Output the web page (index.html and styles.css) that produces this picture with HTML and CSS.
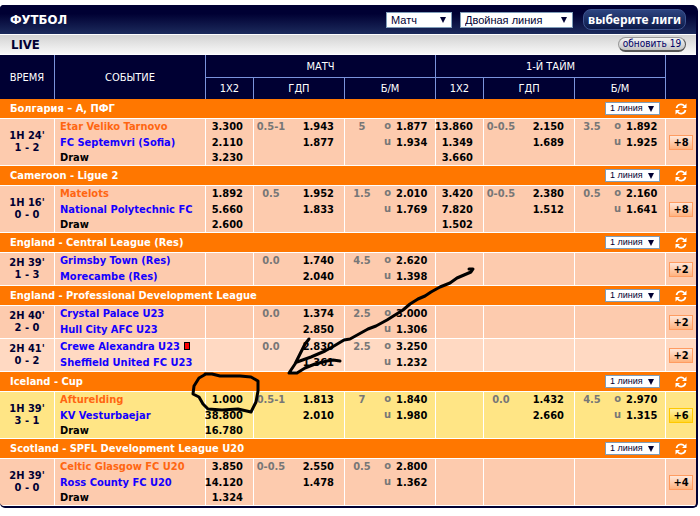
FILE: index.html
```html
<!DOCTYPE html>
<html lang="ru">
<head>
    <meta charset="UTF-8">
    <meta name="viewport" content="width=device-width, initial-scale=1.0">
    <title>Футбол - Live</title>
    <link rel="stylesheet" href="styles.css">
</head>
<body>
    <div class="panel">
        <div class="title-bar">
            <h1>ФУТБОЛ</h1>
            <select class="period" aria-label="Период">
                <option>Матч</option>
            </select>
            <select class="line-type" aria-label="Тип линии">
                <option>Двойная линия</option>
            </select>
            <button class="leagues-btn" type="button">выберите лиги</button>
        </div>
        <div class="live-bar">
            <h2>LIVE</h2>
            <button class="refresh-btn" type="button">обновить 19</button>
        </div>
        <table class="odds">
            <colgroup>
                <col class="c-time"><col>
                <col class="c-win"><col class="c-pair"><col class="c-pair">
                <col class="c-win"><col class="c-pair"><col class="c-pair">
                <col class="c-more">
            </colgroup>
            <thead>
                <tr>
                    <th rowspan="2">ВРЕМЯ</th>
                    <th rowspan="2">СОБЫТИЕ</th>
                    <th colspan="3">МАТЧ</th>
                    <th colspan="3">1-Й ТАЙМ</th>
                    <th rowspan="2"></th>
                </tr>
                <tr class="sub">
                    <th>1X2</th>
                    <th>ГДП</th>
                    <th>Б/М</th>
                    <th>1X2</th>
                    <th>ГДП</th>
                    <th>Б/М</th>
                </tr>
            </thead>
            <tbody id="lines"></tbody>
        </table>
    </div>

    <!-- hand drawn marks over the table -->
    <svg class="marks" width="700" height="516" viewBox="0 0 700 516" aria-hidden="true">
        <path d="M469 269L473 269L471 272L464 275L457 278L450 283L440 287L431 292L425 296L418 299L410 304L403 310L395 315L387 320L376 326L368 329L359 334L350 339L344 340L334 346L325 351L311 357L297 362"/>
        <path d="M309 339L305 344L300 354L295 364L289 373L297 373L305 368L315 364L327 361L333 360L340 361"/>
        <path d="M206 374L199 378L194 386L193 394L199 397L203 404L208 409L222 410L238 409L251 412L256 402L258 391L258 381L251 377L240 376L220 376L212 374L205 374"/>
    </svg>

    <script>
        // fav / card hold the index of the team they belong to
        const leagues = [
            { name: 'Болгария – А, ПФГ', games: [
                { time: "1H 24'", score: '1 - 2', teams: ['Etar Veliko Tarnovo', 'FC Septemvri (Sofia)'], fav: 0, more: 8,
                  match: [['3.300', '2.110', '3.230'], ['0.5-1', '1.943', '1.877'], ['5', '1.877', '1.934']],
                  half: [['13.860', '1.349', '3.660'], ['0-0.5', '2.150', '1.689'], ['3.5', '1.892', '1.925']] }
            ] },
            { name: 'Cameroon - Ligue 2', games: [
                { time: "1H 16'", score: '0 - 0', teams: ['Matelots', 'National Polytechnic FC'], fav: 0, more: 8,
                  match: [['1.892', '5.660', '2.600'], ['0.5', '1.952', '1.833'], ['1.5', '2.010', '1.769']],
                  half: [['3.420', '7.820', '1.502'], ['0-0.5', '2.380', '1.512'], ['0.5', '2.160', '1.641']] }
            ] },
            { name: 'England - Central League (Res)', games: [
                { time: "2H 39'", score: '1 - 3', teams: ['Grimsby Town (Res)', 'Morecambe (Res)'], more: 2,
                  match: [null, ['0.0', '1.740', '2.040'], ['4.5', '2.620', '1.398']] }
            ] },
            { name: 'England - Professional Development League', games: [
                { time: "2H 40'", score: '2 - 0', teams: ['Crystal Palace U23', 'Hull City AFC U23'], more: 2,
                  match: [null, ['0.0', '1.374', '2.850'], ['2.5', '3.000', '1.306']] },
                { time: "2H 41'", score: '0 - 2', teams: ['Crewe Alexandra U23', 'Sheffield United FC U23'], card: 0, more: 2, row: 'light',
                  match: [null, ['0.0', '2.830', '1.361'], ['2.5', '3.250', '1.232']] }
            ] },
            { name: 'Iceland - Cup', games: [
                { time: "1H 39'", score: '3 - 1', teams: ['Afturelding', 'KV Vesturbaejar'], fav: 0, more: 6, row: 'changed',
                  match: [['1.000', '38.800', '16.780'], ['0.5-1', '1.813', '2.010'], ['7', '1.840', '1.980']],
                  half: [null, ['0.0', '1.432', '2.660'], ['4.5', '2.970', '1.315']] }
            ] },
            { name: 'Scotland - SPFL Development League U20', games: [
                { time: "2H 39'", score: '0 - 0', teams: ['Celtic Glasgow FC U20', 'Ross County FC U20'], fav: 0, more: 4,
                  match: [['3.850', '14.120', '1.324'], ['0-0.5', '2.550', '1.478'], ['0.5', '2.800', '1.362']] }
            ] }
        ];

        const reloadIcon = `<svg width="12" height="12" viewBox="0 0 12 12" aria-hidden="true">
            <path d="M1.5 5A4.5 4.5 0 0 1 9.4 3M10.5 7A4.5 4.5 0 0 1 2.6 9" fill="none" stroke="#fff" stroke-width="1.7"/>
            <path d="M11.5 .5V5H7zM.5 11.5V7H5z" fill="#fff"/>
        </svg>`;

        function winCell(odds) {
            return `<td class="win">${(odds || []).map(o => `<div>${o}</div>`).join('')}</td>`;
        }

        function pairCell(data, marks) {
            if (!data) return '<td></td>';
            return `<td><div class="pair">
                <span class="hcp">${data[0]}</span><i>${marks[0]}</i><b>${data[1]}</b>
                <span></span><i>${marks[1]}</i><b>${data[2]}</b>
            </div></td>`;
        }

        function oddsCells(set) {
            const [win, hcp, total] = set || [];
            return winCell(win) + pairCell(hcp, ['', '']) + pairCell(total, ['o', 'u']);
        }

        function gameRow(g) {
            const teams = g.teams.map((t, i) =>
                `<a href="#" class="${g.fav === i ? 'fav' : ''}">${t}${g.card === i ? '<span class="card"></span>' : ''}</a>`
            ).join('');
            const draw = g.fav === undefined ? '' : '<div class="draw">Draw</div>';
            return `<tr class="game ${g.row || ''}">
                <td class="time">${g.time}<br>${g.score}</td>
                <td class="event">${teams}${draw}</td>
                ${oddsCells(g.match)}${oddsCells(g.half)}
                <td class="more"><button type="button">+${g.more}</button></td>
            </tr>`;
        }

        document.getElementById('lines').innerHTML = leagues.map(l => `
            <tr class="league">
                <td colspan="8"><div class="league-head">
                    <span>${l.name}</span>
                    <select aria-label="${l.name}"><option>1 линия</option></select>
                </div></td>
                <td class="reload"><button type="button" aria-label="Обновить">${reloadIcon}</button></td>
            </tr>${l.games.map(gameRow).join('')}`).join('');
    </script>
</body>
</html>
```
FILE: styles.css
```css
body {
    margin: 0;
    padding: 5px 2px 0 0;
    background-color: #fff;
    font-family: "DejaVu Sans Condensed", "Noto Sans", sans-serif;
    font-size: 11px;
    color: #000;
}

h1, h2 {
    margin: 0;
    color: #fff;
    font-size: 13px;
}

button, select {
    box-sizing: border-box;
    margin: 0;
    font-family: inherit;
    cursor: pointer;
}

.panel {
    background-color: #000033;
    border-right: 2px solid #000033;
    border-bottom: 2px solid #000033;
    border-radius: 4px 6px 5px 5px;
    overflow: hidden;
}

/* top bars */
.title-bar {
    display: flex;
    align-items: center;
    gap: 8px;
    height: 29px;
    padding: 0 10px;
    background: linear-gradient(#000033 30%, #1c2b5c);
}

.title-bar h1,
.live-bar h2 {
    flex: 1;
}

select {
    appearance: none;
    border: 1px solid #7f9db9;
    border-radius: 0;
    color: #000033;
    background: #fff url("data:image/svg+xml,%3Csvg xmlns='http://www.w3.org/2000/svg' width='6' height='6'%3E%3Cpath d='M0 0h6L3 6z' fill='%23000033'/%3E%3C/svg%3E") no-repeat right 5px center;
}

.title-bar select {
    height: 16px;
    padding: 0 4px;
    font-family: "Liberation Sans", Arial, sans-serif;
    font-size: 11px;
}

.period {
    width: 66px;
}

.line-type {
    width: 113px;
}

.leagues-btn {
    width: 103px;
    height: 21px;
    margin-left: 2px;
    padding: 0;
    border: 1px solid #3f5590;
    border-radius: 8px;
    background: linear-gradient(#2d4480, #0c1a4a);
    color: #fff;
    font-family: "Noto Sans", sans-serif;
    font-size: 12px;
    font-weight: bold;
    line-height: 18px;
    white-space: nowrap;
}

.live-bar {
    display: flex;
    align-items: center;
    height: 19px;
    padding: 0 10px 0 11px;
    border: 1px solid #fff;
    border-width: 1px 0;
    background: linear-gradient(#d3d3d3, #f8f8f8);
}

.live-bar h2 {
    color: #000033;
}

.refresh-btn {
    width: 68px;
    height: 15px;
    padding: 0;
    border: 1px solid #999;
    border-right-color: #555;
    border-bottom: 2px solid #555;
    border-radius: 8px;
    background: linear-gradient(#f4f4f4, #c4c4c4);
    color: #000066;
    font-size: 10px;
    line-height: 12px;
}

/* odds table */
.odds {
    width: 100%;
    table-layout: fixed;
    border-collapse: separate;
    border-spacing: 0;
}

.c-time { width: 54px; }
.c-win { width: 48px; }
.c-pair { width: 91px; }
.c-more { width: 31px; }

th, td {
    box-sizing: border-box;
    padding: 0;
}

th {
    height: 22px;
    border-left: 1px solid #7a93dc;
    color: #fff;
    font-weight: normal;
}

tr:first-child th:first-child {
    border-left: 0;
}

.sub th {
    border-top: 1px solid #7a93dc;
}

.league td {
    height: 20px;
    border-bottom: 1px solid #fff;
    background-color: #ff7700;
}

.league-head {
    display: flex;
    align-items: center;
    justify-content: space-between;
    padding: 0 5px 0 10px;
    color: #fff;
    font-weight: bold;
}

.league select {
    width: 55px;
    height: 13px;
    padding: 0 4px;
    font-family: "Liberation Sans", Arial, sans-serif;
    font-size: 9px;
    line-height: 11px;
}

.reload {
    text-align: center;
}

.reload button {
    display: block;
    margin: 0 auto;
    padding: 0;
    border: 0;
    background: none;
}

.reload svg {
    display: block;
}

.game td {
    border-left: 1px solid #fff;
    border-bottom: 1px solid #fff;
    background-color: #fdcbae;
    font-weight: bold;
    line-height: 15px;
    vertical-align: top;
}

.game td:first-child {
    border-left: 0;
}

.game.light td {
    background-color: #ffd9c2;
}

.game.changed td {
    background-color: #ffe585;
}

.game .time {
    color: #000033;
    line-height: 12px;
    text-align: center;
    vertical-align: middle;
}

.event a {
    display: block;
    padding-left: 5px;
    color: #1400ff;
    line-height: 16px;
    text-decoration: none;
}

.event a.fav {
    color: #ff6611;
}

.event .draw {
    padding-left: 5px;
    line-height: 14px;
}

.card {
    display: inline-block;
    width: 4px;
    height: 6px;
    margin-left: 4px;
    border: 1px solid #000;
    background-color: #f00;
}

.win {
    text-align: right;
}

.win div {
    margin-left: -6px;
    padding-right: 10px;
    line-height: 16px;
}

.win div:nth-child(3) {
    line-height: 14px;
}

.pair {
    display: grid;
    grid-template-columns: 34px 1fr auto;
    column-gap: 5px;
    padding-right: 10px;
    line-height: 16px;
}

.pair .hcp {
    color: #777;
    text-align: center;
}

.pair i {
    color: #777;
    font-style: normal;
    line-height: 13px;
    text-align: right;
}

.game .more {
    text-align: center;
    vertical-align: middle;
}

.more button {
    width: 24px;
    height: 15px;
    padding: 0;
    border: 1px solid #ff9c60;
    background: linear-gradient(#ffe6d8, #ffb27e);
    color: #000;
    font-size: 11px;
    font-weight: bold;
    line-height: 13px;
}

.changed .more button {
    border-color: #ffc800;
    background: linear-gradient(#fff0a8, #ffd52e);
}

.marks {
    position: absolute;
    top: 0;
    left: 0;
    pointer-events: none;
}

.marks path {
    fill: none;
    stroke: #000;
    stroke-width: 3;
    stroke-linecap: round;
    stroke-linejoin: round;
}
```
